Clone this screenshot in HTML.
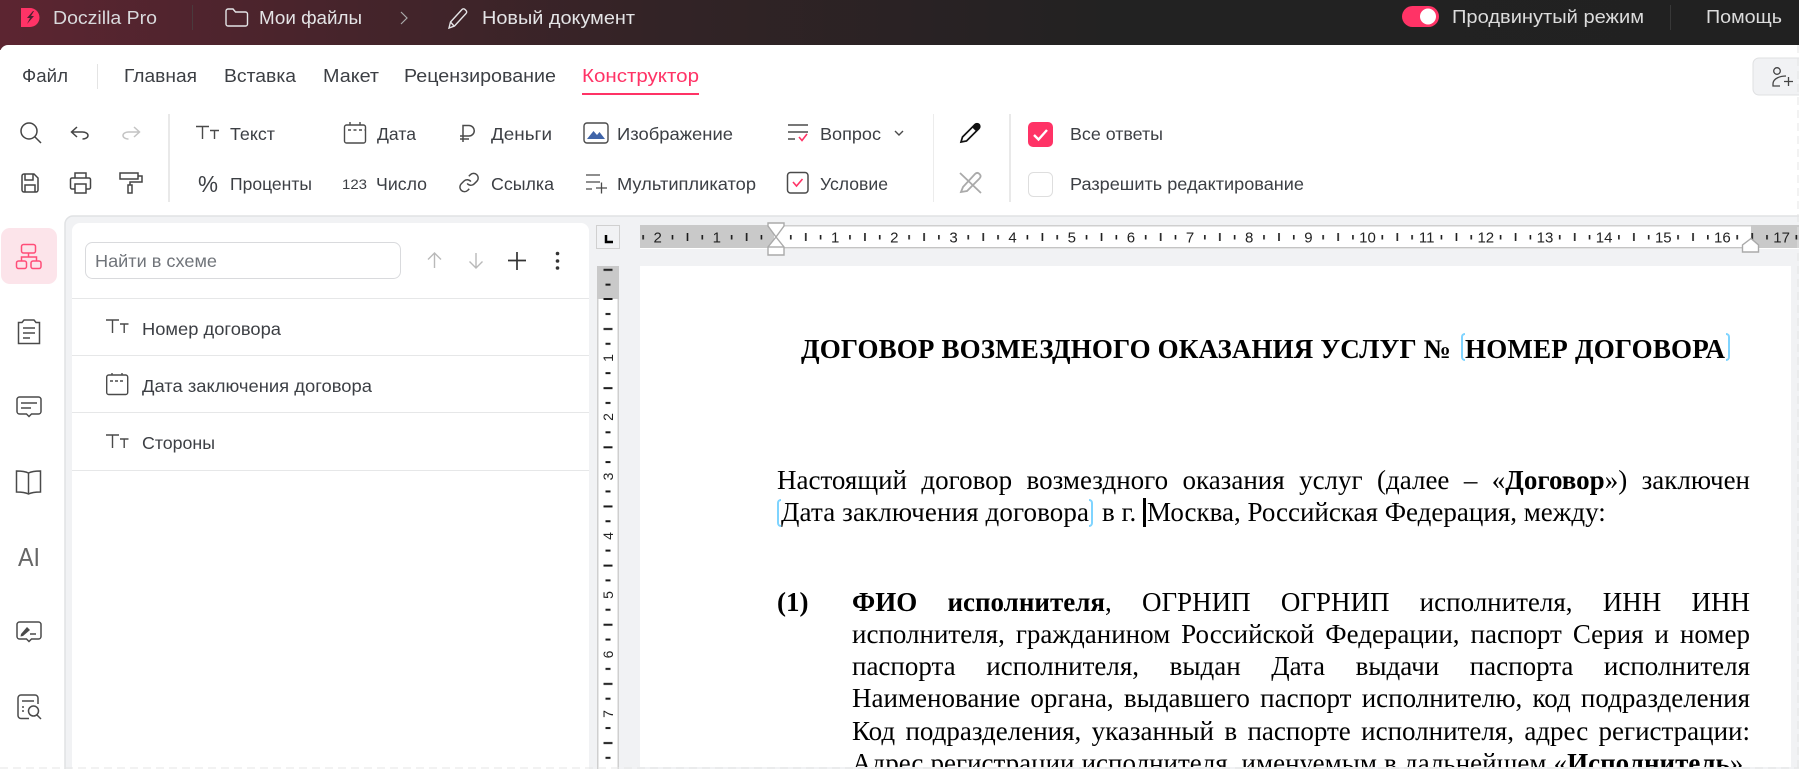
<!DOCTYPE html>
<html lang="ru"><head><meta charset="utf-8"><title>Doczilla Pro</title>
<style>
html,body{margin:0;padding:0;width:1799px;height:769px;overflow:hidden;background:#fff}
#ui{position:absolute;left:0;top:0}
#ui text{font-family:"Liberation Sans","DejaVu Sans",sans-serif;font-size:18px;fill:#3c3f44}
#doc{position:absolute;left:640px;top:266px;width:1151px;height:501px;background:#fff;overflow:hidden;font-family:"Liberation Serif","Noto Serif CJK SC",serif;font-size:27px;color:#000}
.l{position:absolute;white-space:normal;text-align:justify;text-align-last:justify;line-height:32px;height:32px}
.s{position:absolute;white-space:nowrap;line-height:32px}
.b{font-weight:bold}
.br{position:absolute;width:4px;height:28px;border:2px solid #7fd4ff;box-sizing:border-box}
.bl{border-right:0;border-radius:4px 0 0 4px}
.brr{border-left:0;border-radius:0 4px 4px 0}
</style></head><body>
<svg id="ui" width="1799" height="769" viewBox="0 0 1799 769" xmlns="http://www.w3.org/2000/svg" fill="none">
<defs>
<linearGradient id="g" x1="0" x2="1" y1="0" y2="0"><stop offset="0" stop-color="#5c2531"/><stop offset=".36" stop-color="#332326"/><stop offset=".62" stop-color="#222"/><stop offset="1" stop-color="#212121"/></linearGradient>
<pattern id="ht" patternUnits="userSpaceOnUse" x="776" y="225" width="59.15" height="24"><rect x="14" y="10" width="1.6" height="4.500" fill="#1a1a1a"/><rect x="29" y="8" width="1.6" height="8" fill="#1a1a1a"/><rect x="43.800" y="10" width="1.6" height="4.500" fill="#1a1a1a"/></pattern>
<pattern id="vt" patternUnits="userSpaceOnUse" x="597" y="299" width="22" height="59.15"><rect x="8.500" y="14" width="5" height="2" fill="#1a1a1a"/><rect x="6.500" y="29" width="9" height="2" fill="#1a1a1a"/><rect x="8.500" y="43.800" width="5" height="2" fill="#1a1a1a"/></pattern>
</defs>
<!-- top bar -->
<rect width="1799" height="50" fill="url(#g)"/>
<path d="M0 769V53a8 8 0 0 1 8-8H1799V769Z" fill="#fff"/>
<path d="M21 8h9a9.500 9.500 0 0 1 0 19h-9Z" fill="#ff3366"/>
<path d="M33 11l-6 7h3l-3 6 7-8h-3l3-5Z" fill="#4a2230"/>
<text x="53" y="24" textLength="104" lengthAdjust="spacingAndGlyphs" style="fill:#d9d9dc">Doczilla Pro</text>
<rect x="192" y="5" width="1" height="25" fill="#4a3a3d"/>
<path d="M226 24V11a2 2 0 0 1 2-2h5l2.500 3h10a2 2 0 0 1 2 2v10a2 2 0 0 1-2 2h-17.500a2 2 0 0 1-2-2Z" stroke="#e4e4e6" stroke-width="1.400"/>
<text x="259" y="24" textLength="103" lengthAdjust="spacingAndGlyphs" style="fill:#e4e4e6">Мои файлы</text>
<path d="M401 12l6 6-6 6" stroke="#aaa" stroke-width="1.200"/>
<path d="M449 28l1.500-6L462 9.500a2 2 0 0 1 3 0l1 1a2 2 0 0 1 0 3L454.500 26ZM450.500 22l3.500 4" stroke="#e4e4e6" stroke-width="1.400"/>
<text x="482" y="24" textLength="153" lengthAdjust="spacingAndGlyphs" style="fill:#e4e4e6">Новый документ</text>
<rect x="1402" y="6" width="37" height="21" rx="10.500" fill="#ff3366"/><circle cx="1428" cy="16.500" r="8" fill="#fff"/>
<text x="1452" y="23" textLength="192" lengthAdjust="spacingAndGlyphs" style="fill:#dcdcdc">Продвинутый режим</text>
<rect x="1670" y="5" width="1" height="25" fill="#383838"/>
<text x="1706" y="23" textLength="76" lengthAdjust="spacingAndGlyphs" style="fill:#dcdcdc">Помощь</text>
<!-- tabs -->
<text x="22" y="82" textLength="46" lengthAdjust="spacingAndGlyphs">Файл</text>
<rect x="97" y="64" width="1" height="25" fill="#e4e4e4"/>
<text x="124" y="82" textLength="73" lengthAdjust="spacingAndGlyphs">Главная</text>
<text x="224" y="82" textLength="72" lengthAdjust="spacingAndGlyphs">Вставка</text>
<text x="323" y="82" textLength="56" lengthAdjust="spacingAndGlyphs">Макет</text>
<text x="404" y="82" textLength="152" lengthAdjust="spacingAndGlyphs">Рецензирование</text>
<text x="582" y="82" textLength="117" lengthAdjust="spacingAndGlyphs" style="fill:#ff3366">Конструктор</text>
<rect x="582" y="93" width="117" height="2" fill="#ff3366"/>
<!-- share btn -->
<path d="M1799 58h-40a6 6 0 0 0-6 6v25a6 6 0 0 0 6 6h40" fill="#f1f2f4" stroke="#dfe0e2"/>
<circle cx="1777" cy="71" r="3.300" stroke="#444" stroke-width="1.300"/><path d="M1786 76c-5 0-13 2-13 8v2h7" stroke="#444" stroke-width="1.300"/><path d="M1784 81.500h9M1788.500 77v9" stroke="#444" stroke-width="1.300"/>
<!-- left tools -->
<g stroke="#444" stroke-width="1.500">
<circle cx="29" cy="131" r="8"/><path d="M35 137l6 6"/>
<path d="M77 127l-5.500 5 5.500 5M71.500 132h11a5.500 3.500 0 0 1 0 7"/>
<path d="M134 127l5.500 5-5.500 5M139.500 132h-11a5.500 3.500 0 0 0 0 7" stroke="#c4c4c4"/>
<path d="M22 176a2 2 0 0 1 2-2h10l4 4v12a2 2 0 0 1-2 2H24a2 2 0 0 1-2-2ZM25 174v6h8v-6M25 192v-7h10v7"/>
<path d="M75 178v-5h11v5M75 189h-3a1.500 1.500 0 0 1-1.500-1.500v-8a1.500 1.500 0 0 1 1.500-1.500h17a1.500 1.500 0 0 1 1.500 1.500v8a1.500 1.500 0 0 1-1.500 1.500h-3M75 184h11v9H75Z"/>
<path d="M120 173h18v6h-18ZM138 176h4v6h-12v3M128 185h4v8h-4Z"/>
</g>
<rect x="168" y="114" width="2" height="88" fill="#e9e9e9"/>
<!-- constructor icons -->
<g stroke="#4a4a4a" stroke-width="1.400">
<path d="M196 126.500h13M202.500 126.500V139M210 130.500h9M214.500 130.500V139"/>
<path d="M344.500 127a2 2 0 0 1 2-2h17a2 2 0 0 1 2 2v14a2 2 0 0 1-2 2h-17a2 2 0 0 1-2-2ZM350 122v3M360 122v3"/><path d="M348 130h18" stroke-dasharray="3 2.500"/>
<path d="M463 136h6a5 5 0 0 0 0-10.500h-6V142M460 136h3M460 139h9" stroke-width="1.500"/>
<path d="M587 123h18a3 3 0 0 1 3 3v14a3 3 0 0 1-3 3h-18a3 3 0 0 1-3-3v-14a3 3 0 0 1 3-3Z"/>
<path d="M586 175h14M586 182h14M586 189h6M596 188h11M601.500 182.500v11" stroke-width="1.300"/>
<path d="M788 125h20M788 132h20M788 139h7"/>
<rect x="787.500" y="172.500" width="20.500" height="20.500" rx="3" stroke-width="1.500"/>
<path d="M895 131l4 4 4-4"/>
<g transform="translate(458,171.500) scale(.92)" stroke-width="1.600"><path d="M10 13a5 5 0 0 0 7.540.54l3-3a5 5 0 0 0-7.070-7.070l-1.720 1.710"/><path d="M14 11a5 5 0 0 0-7.540-.54l-3 3a5 5 0 0 0 7.070 7.070l1.710-1.710"/></g>
</g>
<path d="M587 139l6.500-8 3.500 4 2.500-3 5.500 7Z" fill="#3f64a8"/>
<path d="M799 137l3 3.500 5-6.500" stroke="#ff3366" stroke-width="1.600"/>
<path d="M793 182l3.500 4 6-7" stroke="#ff3366" stroke-width="1.600"/>
<text x="230" y="140" textLength="45" lengthAdjust="spacingAndGlyphs" style="font-size:17.500px">Текст</text>
<text x="377" y="140" textLength="39" lengthAdjust="spacingAndGlyphs" style="font-size:17.500px">Дата</text>
<text x="491" y="140" textLength="61" lengthAdjust="spacingAndGlyphs" style="font-size:17.500px">Деньги</text>
<text x="617" y="140" textLength="116" lengthAdjust="spacingAndGlyphs" style="font-size:17.500px">Изображение</text>
<text x="820" y="140" textLength="61" lengthAdjust="spacingAndGlyphs" style="font-size:17.500px">Вопрос</text>
<text x="198" y="192" textLength="20" lengthAdjust="spacingAndGlyphs" style="font-size:23px">%</text>
<text x="230" y="190" textLength="82" lengthAdjust="spacingAndGlyphs" style="font-size:17.500px">Проценты</text>
<text x="342" y="189" textLength="25" lengthAdjust="spacingAndGlyphs" style="font-size:14px">123</text>
<text x="376" y="190" textLength="51" lengthAdjust="spacingAndGlyphs" style="font-size:17.500px">Число</text>
<text x="491" y="190" textLength="63" lengthAdjust="spacingAndGlyphs" style="font-size:17.500px">Ссылка</text>
<text x="617" y="190" textLength="139" lengthAdjust="spacingAndGlyphs" style="font-size:17.500px">Мультипликатор</text>
<text x="820" y="190" textLength="68" lengthAdjust="spacingAndGlyphs" style="font-size:17.500px">Условие</text>
<rect x="933" y="114" width="1" height="88" fill="#ececec"/>
<path d="M961 142l1.500-5L975 124.500c1-1 3-1 4 0s1 3 0 4L966.500 141ZM973 127l4 4" stroke="#111" stroke-width="1.700"/>
<path d="M975 124.500c1-1 3-1 4 0s1 3 0 4l-2.500 2.500-4-4Z" fill="#111"/>
<path d="M960 173l21 20M961 192l2-5 12-13c1.500-1.500 3-1.500 4.500 0s1.500 3 0 4.500L967 191Z" stroke="#aaa" stroke-width="1.800"/>
<rect x="1009" y="114" width="2" height="88" fill="#e9e9e9"/>
<rect x="1028" y="122" width="25" height="25" rx="5" fill="#ff3366"/>
<path d="M1034 135l4.500 4.500 8.500-9.500" stroke="#fff" stroke-width="2.400"/>
<rect x="1028.500" y="172.500" width="24" height="24" rx="5" stroke="#dedede" fill="#fff"/>
<text x="1070" y="140" textLength="93" lengthAdjust="spacingAndGlyphs" style="font-size:17.500px">Все ответы</text>
<text x="1070" y="190" textLength="234" lengthAdjust="spacingAndGlyphs" style="font-size:17.500px">Разрешить редактирование</text>
<!-- work area -->
<path d="M65 769V224a8 8 0 0 1 8-8H1799V769Z" fill="#f1f2f4"/>
<path d="M65 769V224a8 8 0 0 1 8-8H1799" stroke="#e0e2e4" stroke-width="1.500"/>
<path d="M72 769V231a8 8 0 0 1 8-8H581a8 8 0 0 1 8 8V769Z" fill="#fff"/>
<!-- sidebar -->
<rect x="1" y="228" width="56" height="56" rx="9" fill="#fce4ea"/>
<g stroke="#ff4d78" stroke-width="1.500"><rect x="21.500" y="244.500" width="14" height="8.500" rx="2"/><rect x="16.500" y="261" width="10" height="7.500" rx="2"/><rect x="31" y="261" width="10" height="7.500" rx="2"/><path d="M28.500 253v4M21.500 261v-4h15v4"/></g>
<g stroke="#4a4a4a" stroke-width="1.500">
<path d="M18.500 322.500h3.500l2-2.500h10l2 2.500h3.500v21h-21ZM23 328h12M23 333h12M23 338h7"/>
<path d="M19.500 397h19a2.500 2.500 0 0 1 2.500 2.500v12a2.500 2.500 0 0 1-2.500 2.500h-7l-2.500 2.500-2.500-2.500h-7a2.500 2.500 0 0 1-2.500-2.500v-12a2.500 2.500 0 0 1 2.500-2.500ZM21 403h16M21 408h10"/>
<path d="M28.500 473c-3-1.500-7-2-12-2v21c5 0 9 .5 12 2 3-1.500 7-2 12-2v-21c-5 0-9 .5-12 2ZM28.500 473v21"/>
<path d="M19.500 622h19a2.500 2.500 0 0 1 2.500 2.500v12a2.500 2.500 0 0 1-2.500 2.500h-7l-2.500 2.500-2.500-2.500h-7a2.500 2.500 0 0 1-2.500-2.500v-12a2.500 2.500 0 0 1 2.500-2.500ZM30 634h6"/>
<path d="M29 718.500h-8a3 3 0 0 1-3-3v-17.500a3 3 0 0 1 3-3h14a3 3 0 0 1 3 3v6M22 701h12M22 707h2M22 711h2"/><circle cx="33.500" cy="711" r="5"/><path d="M37 715l4 4"/>
</g>
<path d="M21 634l6-7 3 3-7 6-2.500.5Z" fill="#4a4a4a"/>
<text x="18" y="566" textLength="22" lengthAdjust="spacingAndGlyphs" style="font-size:26px;fill:#666">AI</text>
<!-- panel -->
<rect x="85.500" y="242.500" width="315" height="36" rx="7" fill="#fff" stroke="#d9dadd"/>
<text x="95" y="267" textLength="122" lengthAdjust="spacingAndGlyphs" style="font-size:17.500px;fill:#70747a">Найти в схеме</text>
<g stroke="#b9b9b9" stroke-width="1.400"><path d="M434.500 268v-15M428 259.500l6.500-6.500 6.500 6.500M476 253v15M469.500 261.500l6.500 6.500 6.500-6.500"/></g>
<path d="M508 260.500h18M517 252v18" stroke="#333" stroke-width="1.700"/>
<g fill="#333"><circle cx="557.500" cy="253.500" r="1.800"/><circle cx="557.500" cy="261" r="1.800"/><circle cx="557.500" cy="268" r="1.800"/></g>
<g fill="#e6e7e8"><rect x="72" y="298" width="517" height="1"/><rect x="72" y="355" width="517" height="1"/><rect x="72" y="412" width="517" height="1"/><rect x="72" y="470" width="517" height="1"/></g>
<g stroke="#4a4a4a" stroke-width="1.400">
<path d="M106 320h13M112.500 320V333M120 324h8.500M124.200 324V333"/>
<path d="M106 435h13M112.500 435V448M120 439h8.500M124.200 439V448"/>
<path d="M106.700 377a2 2 0 0 1 2-2h17a2 2 0 0 1 2 2v15.500a2 2 0 0 1-2 2h-17a2 2 0 0 1-2-2ZM112 373v2M122 373v2"/><path d="M110 381h15" stroke-dasharray="3 2"/>
</g>
<text x="142" y="335" textLength="139" lengthAdjust="spacingAndGlyphs" style="font-size:17.500px">Номер договора</text>
<text x="142" y="392" textLength="230" lengthAdjust="spacingAndGlyphs" style="font-size:17.500px">Дата заключения договора</text>
<text x="142" y="449" textLength="73" lengthAdjust="spacingAndGlyphs" style="font-size:17.500px">Стороны</text>
<!-- ruler corner -->
<rect x="596.500" y="225.500" width="23" height="23" fill="#f1f2f4" stroke="#d0d0d0"/>
<path d="M606 235v7h7" stroke="#000" stroke-width="2.500"/>
<!-- h ruler -->
<rect x="640" y="225" width="1159" height="24" fill="#fff"/>
<rect x="640" y="225" width="134" height="23" fill="#c9c9c9"/><rect x="1751" y="225" width="48" height="23" fill="#c9c9c9"/>
<rect x="774" y="225" width="977" height="1.500" fill="#cfcfcf"/><rect x="774" y="247" width="977" height="1.500" fill="#c4c4c4"/>
<rect x="640" y="225" width="1159" height="24" fill="url(#ht)"/>
<g text-anchor="middle">
<text x="657.700" y="242.500" style="font-size:15px;fill:#222">2</text><text x="716.800" y="242.500" style="font-size:15px;fill:#222">1</text>
<text x="835.200" y="242.500" style="font-size:15px;fill:#222">1</text><text x="894.300" y="242.500" style="font-size:15px;fill:#222">2</text><text x="953.500" y="242.500" style="font-size:15px;fill:#222">3</text><text x="1012.600" y="242.500" style="font-size:15px;fill:#222">4</text><text x="1071.800" y="242.500" style="font-size:15px;fill:#222">5</text><text x="1130.900" y="242.500" style="font-size:15px;fill:#222">6</text><text x="1190.100" y="242.500" style="font-size:15px;fill:#222">7</text><text x="1249.200" y="242.500" style="font-size:15px;fill:#222">8</text><text x="1308.400" y="242.500" style="font-size:15px;fill:#222">9</text><text x="1367.500" y="242.500" style="font-size:15px;fill:#222">10</text><text x="1426.700" y="242.500" style="font-size:15px;fill:#222">11</text><text x="1485.800" y="242.500" style="font-size:15px;fill:#222">12</text><text x="1545" y="242.500" style="font-size:15px;fill:#222">13</text><text x="1604.100" y="242.500" style="font-size:15px;fill:#222">14</text><text x="1663.300" y="242.500" style="font-size:15px;fill:#222">15</text><text x="1722.400" y="242.500" style="font-size:15px;fill:#222">16</text><text x="1781.600" y="242.500" style="font-size:15px;fill:#222">17</text>
</g>
<path d="M768 223h16v3l-8 11 8 10v8h-16v-8l8-10-8-11Z" fill="#fff" stroke="#aaa" stroke-width="1.400"/><path d="M768 247h16" stroke="#aaa" stroke-width="1.400"/>
<path d="M1751 238.500l7.500 6.500v7h-16v-7Z" fill="#fff" stroke="#aaa" stroke-width="1.400"/>
<!-- v ruler -->
<rect x="597" y="266" width="22" height="503" fill="#fff"/>
<rect x="597" y="266" width="22" height="33" fill="#c9c9c9"/>
<rect x="597" y="299" width="1.500" height="470" fill="#cfcfcf"/><rect x="617.500" y="299" width="1.500" height="470" fill="#cfcfcf"/>
<rect x="597" y="266" width="22" height="503" fill="url(#vt)"/>
<rect x="603.500" y="298" width="9" height="2" fill="#1a1a1a"/>
<g text-anchor="middle">
<text transform="translate(613,358) rotate(-90)" style="font-size:14px;fill:#222">1</text><text transform="translate(613,417) rotate(-90)" style="font-size:14px;fill:#222">2</text><text transform="translate(613,476.500) rotate(-90)" style="font-size:14px;fill:#222">3</text><text transform="translate(613,536) rotate(-90)" style="font-size:14px;fill:#222">4</text><text transform="translate(613,595) rotate(-90)" style="font-size:14px;fill:#222">5</text><text transform="translate(613,654.500) rotate(-90)" style="font-size:14px;fill:#222">6</text><text transform="translate(613,714) rotate(-90)" style="font-size:14px;fill:#222">7</text>
</g>
<!-- dashed edges -->
<path d="M0 768H1799M1798 45V769" stroke="#e4e4e4" stroke-width="1" stroke-dasharray="8 5"/>
</svg>
<div id="doc">
<div class="s b" style="left:161px;top:67px;letter-spacing:.14px">ДОГОВОР ВОЗМЕЗДНОГО ОКАЗАНИЯ УСЛУГ №</div>
<div class="br bl" style="left:821px;top:67px"></div>
<div class="s b" style="left:825px;top:67px;letter-spacing:.2px">НОМЕР ДОГОВОРА</div>
<div class="br brr" style="left:1086px;top:67px"></div>
<div class="l" style="left:137px;top:198px;width:973px">Настоящий договор возмездного оказания услуг (далее – «<span class="b">Договор</span>») заключен</div>
<div class="br bl" style="left:137px;top:233px"></div>
<div class="s" style="left:141px;top:230px;letter-spacing:.12px">Дата заключения договора</div>
<div class="br brr" style="left:449px;top:233px"></div>
<div class="s" style="left:462px;top:230px">в г.</div>
<div style="position:absolute;left:503px;top:232px;width:3px;height:29px;background:#000"></div>
<div class="s" style="left:507px;top:230px">Москва, Российская Федерация, между:</div>
<div class="s b" style="left:137px;top:320px">(1)</div>
<div class="l" style="left:212px;top:320px;width:898px"><span class="b">ФИО исполнителя</span>, ОГРНИП ОГРНИП исполнителя, ИНН ИНН</div>
<div class="l" style="left:212px;top:352px;width:898px">исполнителя, гражданином Российской Федерации, паспорт Серия и номер</div>
<div class="l" style="left:212px;top:384px;width:898px">паспорта исполнителя, выдан Дата выдачи паспорта исполнителя</div>
<div class="l" style="left:212px;top:416px;width:898px">Наименование органа, выдавшего паспорт исполнителю, код подразделения</div>
<div class="l" style="left:212px;top:448.500px;width:898px">Код подразделения, указанный в паспорте исполнителя, адрес регистрации:</div>
<div class="l" style="left:212px;top:481px;width:898px">Адрес регистрации исполнителя, именуемым в дальнейшем «<span class="b">Исполнитель</span>».</div>
</div>
</body></html>
